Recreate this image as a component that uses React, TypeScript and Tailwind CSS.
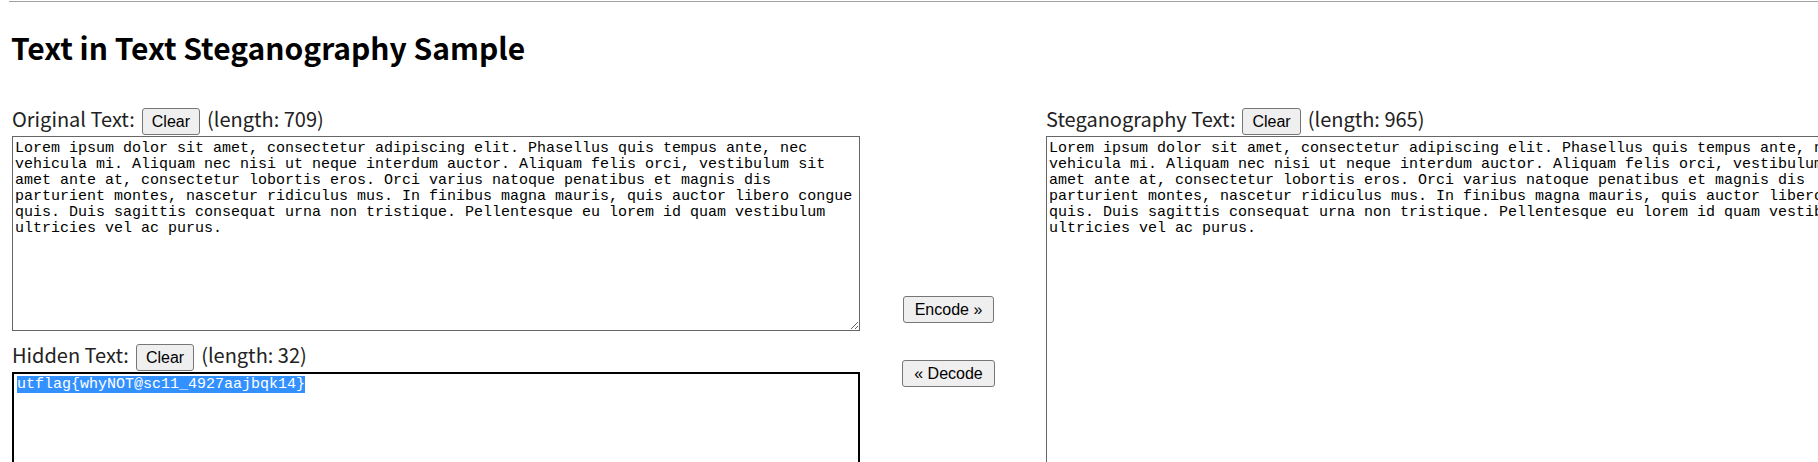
import React from 'react';

const ORIGINAL =
  'Lorem ipsum dolor sit amet, consectetur adipiscing elit. Phasellus quis tempus ante, nec vehicula mi. Aliquam nec nisi ut neque interdum auctor. Aliquam felis orci, vestibulum sit amet ante at, consectetur lobortis eros. Orci varius natoque penatibus et magnis dis parturient montes, nascetur ridiculus mus. In finibus magna mauris, quis auctor libero congue quis. Duis sagittis consequat urna non tristique. Pellentesque eu lorem id quam vestibulum ultricies vel ac purus.';

const HIDDEN = 'utflag{whyNOT@sc11_4927aajbqk14}';

const labelFont = { fontFamily: '"Noto Sans CJK JP", "Noto Sans", sans-serif' };
const monoFont = { fontFamily: '"Liberation Mono", "DejaVu Sans Mono", monospace' };
const btnFont = { fontFamily: '"Liberation Sans", Arial, sans-serif' };

const Btn: React.FC<{ children: React.ReactNode; wide?: boolean }> = ({ children, wide }) => (
  <button
    className={
      'h-[27px] bg-[#efefef] border border-[#767676] rounded-[3px] text-[16px] leading-[25px] text-black hover:bg-[#e5e5e5] ' +
      (wide ? 'px-[11px]' : 'px-[9px]')
    }
    style={btnFont}
  >
    {children}
  </button>
);

const LabelRow: React.FC<{ label: string; length: number }> = ({ label, length }) => (
  <div className="flex items-start gap-[7px] h-[28px] text-[20px] text-[#222]" style={labelFont}>
    <span className="leading-[21px] whitespace-nowrap">{label}</span>
    <Btn>Clear</Btn>
    <span className="leading-[21px] whitespace-nowrap">(length: {length})</span>
  </div>
);

export default function App() {
  return (
    <div className="w-[1818px] h-[462px] overflow-hidden bg-white text-black">
      <div className="pt-px">
        <div className="ml-[9px] h-px bg-[#a0a0a0]" />
      </div>

      <h2 className="ml-[11px] mt-[25px] text-[30px] leading-[40px] font-bold" style={labelFont}>
        Text in Text Steganography Sample
      </h2>

      <div className="flex items-start ml-[12px] mt-[41px]">
        {/* left column */}
        <div className="w-[848px] shrink-0">
          <LabelRow label="Original Text:" length={709} />
          <textarea
            className="block w-[848px] h-[195px] border border-[#666] pt-[4px] px-[2px] text-[15px] leading-[16px] text-black bg-white"
            style={monoFont}
            defaultValue={ORIGINAL}
            spellCheck={false}
          />
          <div className="mt-[13px]">
            <LabelRow label="Hidden Text:" length={32} />
          </div>
          <div
            className="w-[848px] h-[195px] border-2 border-black pt-[3px] px-[3px] text-[15px] leading-[16px] bg-white"
            style={monoFont}
          >
            <span className="bg-[#3390ff] text-white">{HIDDEN}</span>
          </div>
        </div>

        {/* middle buttons */}
        <div className="w-[177px] shrink-0 flex flex-col items-center gap-[37px] mt-[188px]">
          <Btn wide>Encode »</Btn>
          <Btn wide>« Decode</Btn>
        </div>

        {/* right column */}
        <div className="w-[848px] shrink-0 ml-[9px]">
          <LabelRow label="Steganography Text:" length={965} />
          <textarea
            className="block w-[848px] h-[432px] border border-[#666] pt-[4px] px-[2px] text-[15px] leading-[16px] text-black bg-white"
            style={monoFont}
            defaultValue={ORIGINAL}
            spellCheck={false}
          />
        </div>
      </div>
    </div>
  );
}
